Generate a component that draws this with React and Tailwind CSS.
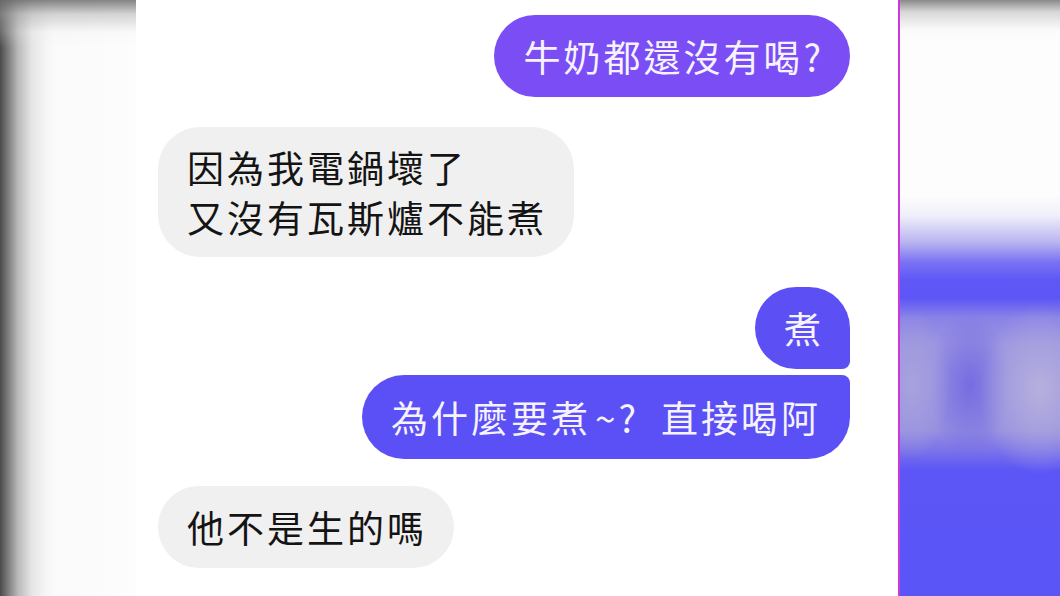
export default function App() {
  const font = { fontFamily: '"Noto Sans CJK TC", "Noto Sans", sans-serif' };
  return (
    <div className="flex h-[596px] w-[1060px] overflow-hidden bg-white" style={font}>
      {/* left blurred edge */}
      <div className="w-[136px] shrink-0 bg-[linear-gradient(to_bottom,rgba(110,110,110,0.85)_0px,rgba(170,170,170,0.5)_14px,rgba(235,235,235,0.2)_32px,rgba(255,255,255,0)_48px),linear-gradient(to_right,#4a4a4a_0px,#7c7c7c_8px,#b9b9b9_18px,#e6e6e6_32px,#f7f7f7_48px,#fafafa_54px,#fdfdfd_100%)]" />

      {/* chat panel */}
      <div className="flex w-[762px] shrink-0 flex-col bg-white pl-[22px] pr-[48px] pt-[15px] text-[37px] leading-[50px] tracking-[3px]">
        <div className="flex justify-end">
          <div className="rounded-full bg-[#7a4df5] py-[16px] pl-[29px] pr-[26px] text-[#f6f2ff]">
            牛奶都還沒有喝?
          </div>
        </div>

        <div className="mt-[30px] flex justify-start">
          <div className="rounded-[42px] bg-[#f0f0f0] py-[15px] pl-[29px] pr-[27px] text-[#141414]">
            <div>因為我電鍋壞了</div>
            <div>又沒有瓦斯爐不能煮</div>
          </div>
        </div>

        <div className="mt-[30px] flex flex-col items-end gap-[6px]">
          <div className="rounded-[42px] rounded-br-[8px] bg-[#5c50f5] py-[16px] pl-[29px] pr-[26px] text-[#f6f2ff]">
            煮
          </div>
          <div className="flex rounded-[42px] rounded-tr-[8px] bg-[#5a50f5] py-[17px] pl-[29px] pr-[29px] text-[#f6f2ff]">
            <span>為什麼要煮</span>
            <span className="ml-[4px]">~?</span>
            <span className="ml-[22px]">直接喝阿</span>
          </div>
        </div>

        <div className="mt-[27px] flex justify-start">
          <div className="rounded-full bg-[#f0f0f0] py-[16px] pl-[29px] pr-[27px] text-[#141414]">
            他不是生的嗎
          </div>
        </div>
      </div>

      {/* divider */}
      <div className="w-[2px] shrink-0 bg-[#cf37d9]" />

      {/* right blurred edge */}
      <div className="flex-1 bg-[linear-gradient(to_bottom,rgba(110,110,110,0.8)_0px,rgba(170,170,170,0.45)_12px,rgba(235,235,235,0.15)_30px,rgba(255,255,255,0)_44px),radial-gradient(ellipse_38px_75px_at_12px_385px,rgba(168,162,222,1),rgba(168,162,222,0)),radial-gradient(ellipse_60px_85px_at_140px_390px,rgba(182,176,222,1),rgba(182,176,222,0)),radial-gradient(ellipse_40px_75px_at_70px_385px,rgba(118,108,226,1),rgba(118,108,226,0)),linear-gradient(to_bottom,#fdfdfd_0px,#fdfdfd_195px,#f1f0fb_215px,#bab5f0_242px,#7a72f3_262px,#5f57f6_280px,#5d56f6_298px,#8a83e6_318px,#9a93e0_345px,#958ee0_430px,#7e76e8_448px,#5c56f6_470px,#5a55f7_100%)]" />
    </div>
  );
}
